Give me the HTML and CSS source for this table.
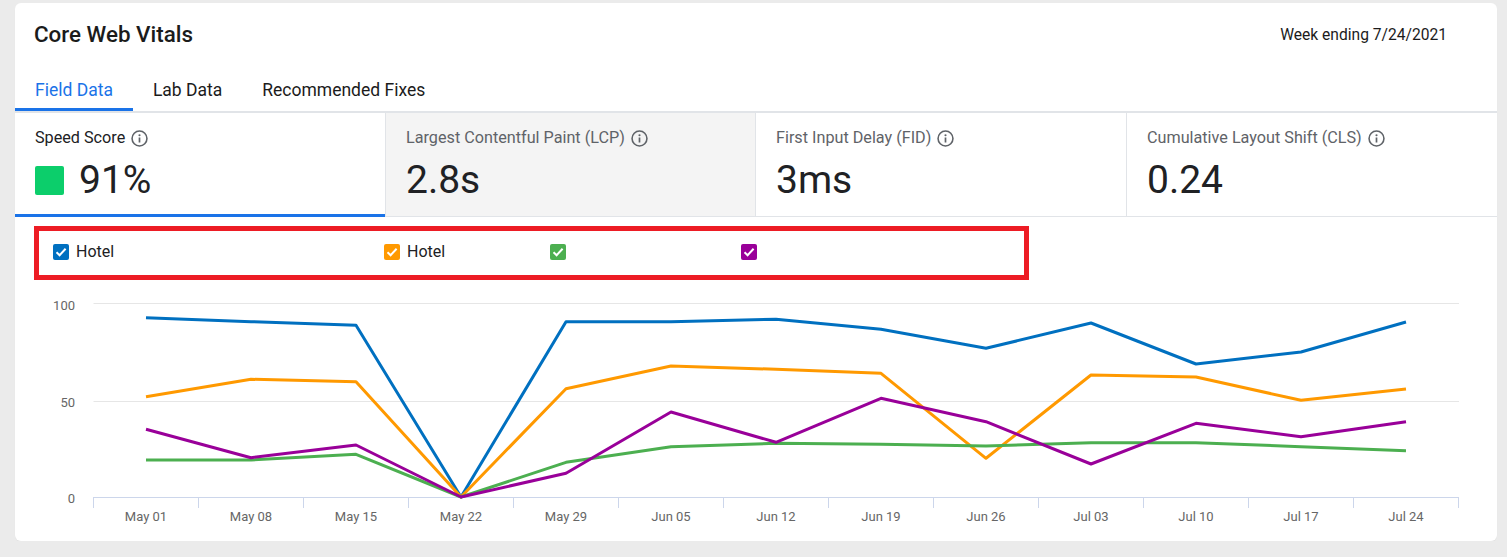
FILE: index.html
```html
<!DOCTYPE html>
<html lang="en">
<head>
<meta charset="utf-8">
<title>Core Web Vitals</title>
<link rel="stylesheet" href="styles.css">
</head>
<body>
<div class="card">
  <div class="header">
    <h1 class="title">Core Web Vitals</h1>
    <div class="week">Week ending 7/24/2021</div>
  </div>
  <div class="tabs">
    <div class="tab active">Field Data</div>
    <div class="tab">Lab Data</div>
    <div class="tab">Recommended Fixes</div>
  </div>
  <div class="metrics">
    <div class="metric active">
      <div class="label">Speed Score
        <svg class="info" viewBox="0 0 16 16"><circle cx="8" cy="8" r="7" fill="none" stroke="currentColor" stroke-width="1.5"/><circle cx="8" cy="4.9" r="1" fill="currentColor"/><line x1="8" y1="7" x2="8" y2="11.8" stroke="currentColor" stroke-width="1.6"/></svg>
      </div>
      <div class="value"><span class="pass"></span>91%</div>
    </div>
    <div class="metric hover">
      <div class="label muted">Largest Contentful Paint (LCP)
        <svg class="info" viewBox="0 0 16 16"><circle cx="8" cy="8" r="7" fill="none" stroke="currentColor" stroke-width="1.5"/><circle cx="8" cy="4.9" r="1" fill="currentColor"/><line x1="8" y1="7" x2="8" y2="11.8" stroke="currentColor" stroke-width="1.6"/></svg>
      </div>
      <div class="value">2.8s</div>
    </div>
    <div class="metric">
      <div class="label muted">First Input Delay (FID)
        <svg class="info" viewBox="0 0 16 16"><circle cx="8" cy="8" r="7" fill="none" stroke="currentColor" stroke-width="1.5"/><circle cx="8" cy="4.9" r="1" fill="currentColor"/><line x1="8" y1="7" x2="8" y2="11.8" stroke="currentColor" stroke-width="1.6"/></svg>
      </div>
      <div class="value">3ms</div>
    </div>
    <div class="metric">
      <div class="label muted">Cumulative Layout Shift (CLS)
        <svg class="info" viewBox="0 0 16 16"><circle cx="8" cy="8" r="7" fill="none" stroke="currentColor" stroke-width="1.5"/><circle cx="8" cy="4.9" r="1" fill="currentColor"/><line x1="8" y1="7" x2="8" y2="11.8" stroke="currentColor" stroke-width="1.6"/></svg>
      </div>
      <div class="value">0.24</div>
    </div>
  </div>

  <div class="legend">
    <div class="item item-1">
      <span class="check blue"><svg viewBox="0 0 16 16"><path d="M3.5 8.2 L6.6 11.2 L12.6 4.8" fill="none" stroke="#fff" stroke-width="2"/></svg></span>
      <span class="name">Hotel</span>
    </div>
    <div class="item item-2">
      <span class="check orange"><svg viewBox="0 0 16 16"><path d="M3.5 8.2 L6.6 11.2 L12.6 4.8" fill="none" stroke="#fff" stroke-width="2"/></svg></span>
      <span class="name">Hotel</span>
    </div>
    <div class="item item-3">
      <span class="check green"><svg viewBox="0 0 16 16"><path d="M3.5 8.2 L6.6 11.2 L12.6 4.8" fill="none" stroke="#fff" stroke-width="2"/></svg></span>
    </div>
    <div class="item">
      <span class="check purple"><svg viewBox="0 0 16 16"><path d="M3.5 8.2 L6.6 11.2 L12.6 4.8" fill="none" stroke="#fff" stroke-width="2"/></svg></span>
    </div>
  </div>

  <svg class="chart" viewBox="15 285 1482 250" width="1482" height="250">
    <g stroke="#e6e6e6" stroke-width="1">
      <line x1="93.5" y1="303.5" x2="1459" y2="303.5"/>
      <line x1="93.5" y1="401.5" x2="1459" y2="401.5"/>
    </g>
    <g stroke="#ccd6eb" stroke-width="1">
      <line x1="93.5" y1="497.5" x2="1459" y2="497.5"/>
      <line x1="93.5" y1="497" x2="93.5" y2="508"/>
      <line x1="198.5" y1="497" x2="198.5" y2="508"/>
      <line x1="303.5" y1="497" x2="303.5" y2="508"/>
      <line x1="408.5" y1="497" x2="408.5" y2="508"/>
      <line x1="513.5" y1="497" x2="513.5" y2="508"/>
      <line x1="618.5" y1="497" x2="618.5" y2="508"/>
      <line x1="723.5" y1="497" x2="723.5" y2="508"/>
      <line x1="828.5" y1="497" x2="828.5" y2="508"/>
      <line x1="933.5" y1="497" x2="933.5" y2="508"/>
      <line x1="1038.5" y1="497" x2="1038.5" y2="508"/>
      <line x1="1143.5" y1="497" x2="1143.5" y2="508"/>
      <line x1="1248.5" y1="497" x2="1248.5" y2="508"/>
      <line x1="1353.5" y1="497" x2="1353.5" y2="508"/>
      <line x1="1458.5" y1="497" x2="1458.5" y2="508"/>
    </g>
    <g class="axis-label" text-anchor="end">
      <text x="75" y="310">100</text>
      <text x="75" y="406.5">50</text>
      <text x="75" y="502.5">0</text>
    </g>
    <g class="axis-label" text-anchor="middle">
      <text x="146" y="520.5">May 01</text>
      <text x="251" y="520.5">May 08</text>
      <text x="356" y="520.5">May 15</text>
      <text x="461" y="520.5">May 22</text>
      <text x="566" y="520.5">May 29</text>
      <text x="671" y="520.5">Jun 05</text>
      <text x="776" y="520.5">Jun 12</text>
      <text x="881" y="520.5">Jun 19</text>
      <text x="986" y="520.5">Jun 26</text>
      <text x="1091" y="520.5">Jul 03</text>
      <text x="1196" y="520.5">Jul 10</text>
      <text x="1301" y="520.5">Jul 17</text>
      <text x="1406" y="520.5">Jul 24</text>
    </g>
    <g fill="none" stroke-width="3" stroke-linejoin="round" stroke-linecap="butt">
      <polyline stroke="#0070c0" points="146,317.7 251,321.7 356,325.3 461,497 566,321.7 671,321.7 776,319.3 881,329.3 986,348.3 1091,323 1196,364 1301,352 1406,322"/>
      <polyline stroke="#ff9900" points="146,396.7 251,379.3 356,381.7 461,497 566,388.7 671,366 776,369.3 881,373.3 986,458.3 1091,375 1196,377 1301,400.3 1406,389"/>
      <polyline stroke="#4caf50" points="146,460 251,460 356,454.3 461,497 566,462.3 671,446.7 776,443.3 881,444.3 986,446 1091,442.7 1196,442.7 1301,446.7 1406,450.7"/>
      <polyline stroke="#990099" points="146,429.3 251,457.7 356,445 461,497 566,473.3 671,412 776,442.3 881,398.3 986,421.7 1091,464 1196,423.3 1301,436.7 1406,421.7"/>
    </g>
  </svg>
</div>
</body>
</html>
```

FILE: styles.css
```css
* { box-sizing: border-box; }

body {
  margin: 0;
  background: #ebebeb;
  font-family: Roboto, "Liberation Sans", Arial, sans-serif;
  color: #202124;
}

.card {
  margin: 3px 10px 0 15px;
  width: 1482px;
  background: #fff;
  border-radius: 6px;
  padding-bottom: 6px;
  box-shadow: 0 1px 1px rgba(0, 0, 0, 0.04);
  overflow: hidden;
}

.header {
  height: 62px;
  display: flex;
  justify-content: space-between;
  align-items: flex-start;
  padding: 0 50px 0 19px;
}

.title {
  margin: 18px 0 0;
  font-size: 22.4px;
  line-height: 26px;
  font-weight: 500;
  color: #1b1b1b;
}

.week {
  margin-top: 22px;
  font-size: 15.6px;
  line-height: 20px;
  color: #1b1b1b;
}

.tabs {
  display: flex;
  border-bottom: 2px solid #e1e4e8;
}

.tab {
  padding: 14px 20px 7px;
  font-size: 17.5px;
  line-height: 22px;
  color: #1b1b1b;
  border-bottom: 3px solid transparent;
}

.tab.active {
  color: #1a73e8;
  border-bottom-color: #1a73e8;
}

.metrics {
  display: grid;
  grid-template-columns: 370px 370px 371px 371px;
}

.metric {
  height: 104px;
  padding: 14px 20px 0;
  border-bottom: 1px solid #e1e4e8;
  border-left: 1px solid #e1e4e8;
}

.metric:first-child {
  border-left: none;
}

.metric.active {
  border-bottom: 3px solid #1a73e8;
}

.metric.hover {
  background: #f4f4f4;
}

.label {
  display: flex;
  align-items: center;
  font-size: 16.2px;
  line-height: 22px;
  color: #202124;
}

.label.muted {
  color: #5f6368;
}

.info {
  width: 17px;
  height: 17px;
  margin-left: 6px;
  color: #5f6368;
}

.value {
  display: flex;
  align-items: center;
  margin-top: 9px;
  font-size: 39px;
  line-height: 44px;
  color: #202124;
}

.pass {
  width: 29px;
  height: 29px;
  border-radius: 2px;
  background: #0cce6b;
  margin-right: 15px;
}

.legend {
  margin: 9px 0 0 19px;
  width: 995px;
  height: 54px;
  border: 5px solid #ed1c24;
  display: flex;
  align-items: center;
  padding: 0 0 2px 14px;
}

.item {
  display: flex;
  align-items: center;
}

.item-1 { width: 331px; }
.item-2 { width: 166px; }
.item-3 { width: 191px; }

.check {
  width: 16px;
  height: 16px;
  border-radius: 2px;
  display: flex;
}

.check svg {
  width: 16px;
  height: 16px;
}

.check.blue { background: #0070c0; }
.check.orange { background: #ff9900; }
.check.green { background: #4caf50; }
.check.purple { background: #990099; }

.name {
  margin-left: 7px;
  font-size: 16px;
  line-height: 20px;
  color: #202124;
}

.chart {
  display: block;
  margin-top: 5px;
}

.axis-label {
  font-family: Roboto, "Liberation Sans", Arial, sans-serif;
  font-size: 13px;
  fill: #666666;
}
```
